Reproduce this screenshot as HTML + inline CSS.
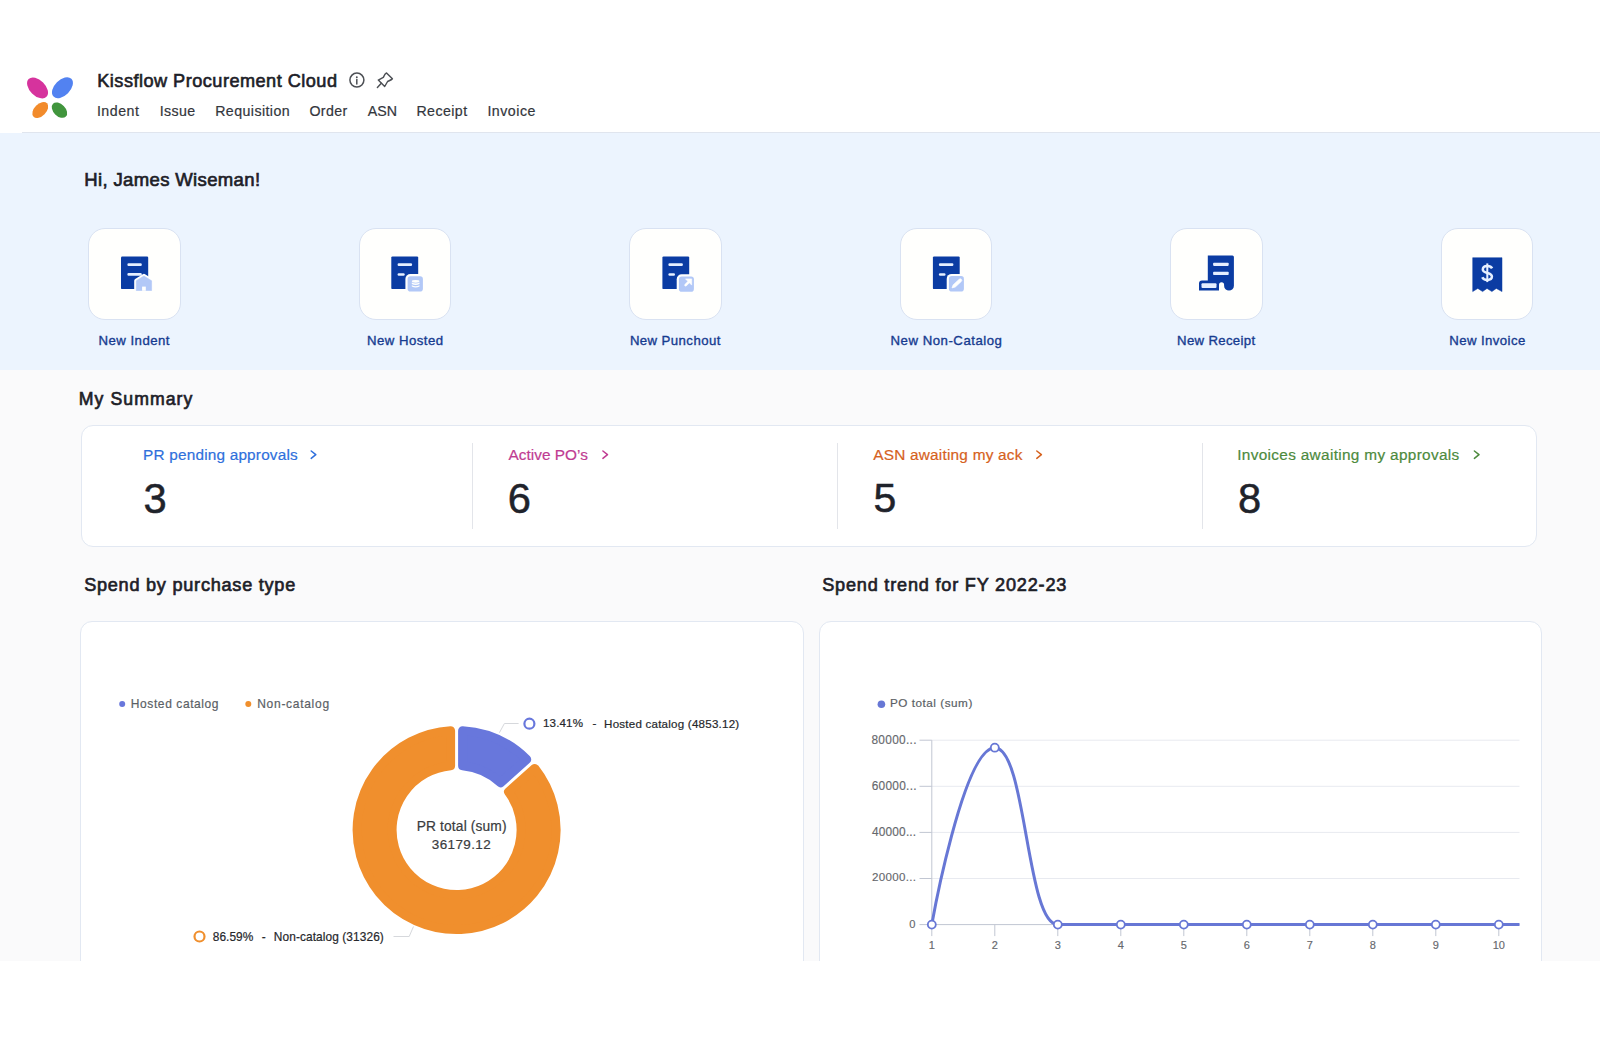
<!DOCTYPE html>
<html><head><meta charset="utf-8">
<title>Kissflow Procurement Cloud</title>
<style>
*{margin:0;padding:0;box-sizing:border-box}
html,body{width:1600px;height:1045px;overflow:hidden;background:#fff;font-family:"Liberation Sans",sans-serif}
.a{position:absolute;white-space:nowrap;line-height:1}
.bg{position:absolute}
.card{position:absolute;width:92.5px;height:92px;border-radius:17px;background:#fffffd;border:1px solid #d9e2f2}
.ic{position:absolute;left:0;top:0}
.div{position:absolute;top:443px;width:1px;height:86px;background:#e3e5ea}
.ccard{position:absolute;top:621px;height:400px;background:#fff;border:1px solid #e2e8f2;border-radius:12px}
</style></head><body>
<div class="bg" style="left:0;top:0;width:1600px;height:133px;background:#fff"></div>
<div class="bg" style="left:22px;top:132px;width:1578px;height:1px;background:#e0e5ee"></div>
<div class="bg" style="left:0;top:133px;width:1600px;height:237px;background:#ecf4fe"></div>
<div class="bg" style="left:0;top:370px;width:1600px;height:591px;background:#fafafb"></div>

<!-- logo -->
<svg class="a" style="left:0;top:0" width="120" height="133" viewBox="0 0 120 133">
  <ellipse cx="37.55" cy="87.9" rx="12.6" ry="7.8" transform="rotate(45 37.55 87.9)" fill="#d6339d"/>
  <ellipse cx="62.45" cy="87.7" rx="12.6" ry="7.8" transform="rotate(-45 62.45 87.7)" fill="#5282f1"/>
  <ellipse cx="40.3" cy="110.05" rx="9.5" ry="6" transform="rotate(-45 40.3 110.05)" fill="#f28b2b"/>
  <ellipse cx="59.45" cy="110.15" rx="9.1" ry="6" transform="rotate(45 59.45 110.15)" fill="#41953d"/>
</svg>

<!-- info + pin icons -->
<svg class="a" style="left:340px;top:65px" width="60" height="30" viewBox="0 0 60 30">
  <circle cx="16.9" cy="15.1" r="7" fill="none" stroke="#4d5055" stroke-width="1.5"/>
  <circle cx="16.8" cy="12.3" r="0.95" fill="#4d5055"/>
  <line x1="16.8" y1="14.6" x2="16.8" y2="18.9" stroke="#4d5055" stroke-width="1.5" stroke-linecap="round"/>
  <path d="M46.5,7.9 L52.4,13.8 C51.6,14.9 49.6,15.6 47.6,16.5 L44.7,21.5 L38.3,15.1 L43.3,12.4 C44.2,10.4 45,8.6 46.5,7.9 Z" fill="none" stroke="#4d5055" stroke-width="1.45" stroke-linejoin="round"/>
  <line x1="41.3" y1="18.3" x2="37.4" y2="22.4" stroke="#4d5055" stroke-width="1.45" stroke-linecap="round"/>
</svg>

<!-- quick action cards -->
<div class="card" style="left:88px;top:227.5px"></div>
<div class="card" style="left:358.5px;top:227.5px"></div>
<div class="card" style="left:629px;top:227.5px"></div>
<div class="card" style="left:899.5px;top:227.5px"></div>
<div class="card" style="left:1170px;top:227.5px"></div>
<div class="card" style="left:1440.5px;top:227.5px"></div>
<svg class="a" style="left:0;top:240px" width="1600" height="70" viewBox="0 240 1600 70">
 <g fill="#0b3ca3">
  <rect x="121" y="256.5" width="27.2" height="32.6" rx="1.2"/>
  <rect x="391.3" y="256.4" width="26.9" height="32.7" rx="1.2"/>
  <rect x="662.4" y="256.4" width="26.8" height="32.7" rx="1.2"/>
  <rect x="932.9" y="256.4" width="26.8" height="32.7" rx="1.2"/>
  <path d="M1207.8,255.6 L1232.4,255.6 Q1233.9,255.6 1233.9,257.1 L1233.9,285.7 A4.9,4.9 0 0 1 1224.1,285.7 L1224.1,284.8 A2.55,2.55 0 0 0 1219,284.8 L1219,290.6 L1199,290.6 L1199,283.6 Q1199,280.6 1202,280.6 L1207.8,280.6 Z"/>
  <path d="M1472.7,257.7 L1502,257.7 L1502,291.6 L1496.3,288.4 L1491.9,291.6 L1487,288.4 L1482.6,291.6 L1477.8,288.4 L1472.7,291.6 Z" stroke="#0b3ca3" stroke-width="0.5" stroke-linejoin="round"/>
 </g>
 <g fill="#e6efff">
  <rect x="127.4" y="263.2" width="14.4" height="2.8" rx="1.2"/>
  <rect x="127.4" y="273" width="14.4" height="2.8" rx="1.2"/>
  <rect x="397.6" y="263.2" width="14.5" height="2.8" rx="1.2"/>
  <rect x="397.6" y="273.2" width="7.1" height="2.6" rx="1.2"/>
  <rect x="668.4" y="263.2" width="14.5" height="2.8" rx="1.2"/>
  <rect x="668.4" y="273.2" width="6.6" height="2.6" rx="1.2"/>
  <rect x="938.9" y="263.2" width="14.5" height="2.8" rx="1.2"/>
  <rect x="938.9" y="273.2" width="6.6" height="2.6" rx="1.2"/>
  <rect x="1213.1" y="262.7" width="15.6" height="3.2" rx="0.8"/>
  <rect x="1213.1" y="271.8" width="15.6" height="3.2" rx="0.8"/>
  <rect x="1201.5" y="283.2" width="15" height="4.8" rx="1"/>
 </g>
 <!-- house -->
 <path d="M143.95,276 L151.6,280.8 L151.6,290.5 L136.3,290.5 L136.3,280.8 Z" fill="#fffffd" stroke="#fffffd" stroke-width="4.2" stroke-linejoin="round"/>
 <path d="M143.95,276 L151.6,280.8 L151.6,290.5 L136.3,290.5 L136.3,280.8 Z" fill="#b2c8f7" stroke="#b2c8f7" stroke-width="0.6" stroke-linejoin="round"/>
 <rect x="142.1" y="286.6" width="3.7" height="4.2" fill="#fffffd"/>
 <!-- badges -->
 <g fill="#fffffd">
  <rect x="405.4" y="274.1" width="19.7" height="19.7" rx="5"/>
  <rect x="676.7" y="274.2" width="19.4" height="19.75" rx="5"/>
  <rect x="946.7" y="273.9" width="19.4" height="19.8" rx="5"/>
 </g>
 <g fill="#b2c8f7">
  <rect x="407.6" y="276.3" width="15.3" height="15.3" rx="2.8"/>
  <rect x="678.9" y="276.4" width="15" height="15.35" rx="2.8"/>
  <rect x="948.9" y="276.1" width="15" height="15.4" rx="2.8"/>
 </g>
 <!-- db -->
 <g fill="#fffffd">
  <ellipse cx="415.65" cy="281.3" rx="3.85" ry="1.35"/>
  <path d="M411.8,282.4 Q415.65,284.6 419.5,282.4 L419.5,284 Q415.65,286.2 411.8,284 Z"/>
  <path d="M411.8,285.2 Q415.65,287.4 419.5,285.2 L419.5,286.6 Q415.65,288.6 411.8,286.6 Z"/>
 </g>
 <!-- arrow -->
 <path d="M685.6,285.2 L689.6,281.2" stroke="#fffffd" stroke-width="2.5" stroke-linecap="round"/>
 <path d="M685.5,278.9 L691.7,278.9 L691.7,285.1 Z" fill="#fffffd" stroke="#fffffd" stroke-width="0.6" stroke-linejoin="round"/>
 <!-- pencil -->
 <path d="M952,287.9 L953.1,284.9 L959.2,279.3 A1.3,1.3 0 0 1 961.3,281.4 L955.3,287 Z" fill="#fffffd" stroke="#fffffd" stroke-width="0.7" stroke-linejoin="round"/>
 <path d="M1492.1,268.4 C1491.4,266.9 1489.7,266.1 1487.3,266.1 C1484.4,266.1 1482.8,267.6 1482.8,269.6 C1482.8,274.2 1491.9,271.9 1491.9,276.6 C1491.9,278.7 1490.1,279.9 1487.3,279.9 C1484.7,279.9 1483,278.9 1482.3,277.2" fill="none" stroke="#e6efff" stroke-width="2.5" stroke-linecap="butt"/>
 <line x1="1487.3" y1="263.4" x2="1487.3" y2="282.1" stroke="#e6efff" stroke-width="2"/>
</svg>

<!-- summary -->
<div class="bg" style="left:81px;top:425px;width:1456px;height:122px;background:#fff;border:1px solid #e2e8f2;border-radius:12px"></div>
<div class="div" style="left:472px"></div>
<div class="div" style="left:837px"></div>
<div class="div" style="left:1202px"></div>
<svg class="a" style="left:0;top:440px" width="1600" height="25" viewBox="0 440 1600 25">
 <g fill="none" stroke-width="1.5" stroke-linecap="round" stroke-linejoin="round">
  <path d="M311.2,451 L315.8,454.7 L311.2,458.4" stroke="#2f6fdc"/>
  <path d="M602.9,451 L607.5,454.7 L602.9,458.4" stroke="#c03b92"/>
  <path d="M1036.8,451 L1041.4,454.7 L1036.8,458.4" stroke="#d6611d"/>
  <path d="M1474.4,451 L1479,454.7 L1474.4,458.4" stroke="#4d8a3d"/>
 </g>
</svg>

<div class="ccard" style="left:80px;width:724px"></div>
<div class="ccard" style="left:818.5px;width:723px"></div>

<!-- charts -->
<svg class="a" style="left:0;top:0" width="1600" height="1045" viewBox="0 0 1600 1045">
 <circle cx="122.2" cy="703.9" r="3" fill="#6877dc"/>
 <circle cx="248.3" cy="703.9" r="3" fill="#f08f2d"/>
 <circle cx="881.4" cy="704.2" r="3.8" fill="#6777d5"/>
 <path d="M534.74,768.40 A99.50,99.50 0 1 1 450.60,730.68 L450.60,765.78 A64.50,64.50 0 1 0 508.53,791.75 Z" fill="#f08f2d" stroke="#f08f2d" stroke-width="9.0" stroke-linejoin="round"/><path d="M462.60,730.68 A99.50,99.50 0 0 1 526.75,759.44 L500.55,782.79 A64.50,64.50 0 0 0 462.60,765.78 Z" fill="#6877dc" stroke="#6877dc" stroke-width="9.0" stroke-linejoin="round"/>
 <path d="M499.4,732.7 L504.4,723.5 L518.6,723.5" fill="none" stroke="#d6d8dc" stroke-width="1"/>
 <circle cx="529.4" cy="723.7" r="5" fill="none" stroke="#6877dc" stroke-width="2.2"/>
 <path d="M413.5,926.5 L409.2,936.5 L393.5,936.5" fill="none" stroke="#d6d8dc" stroke-width="1"/>
 <circle cx="199.5" cy="936.5" r="5" fill="none" stroke="#f08f2d" stroke-width="2.2"/>
 <line x1="931.8" y1="878.50" x2="1519.5" y2="878.50" stroke="#e8eaf0" stroke-width="1"/>
<line x1="919.5" y1="878.50" x2="931.8" y2="878.50" stroke="#c1c6d2" stroke-width="1"/>
<line x1="931.8" y1="832.40" x2="1519.5" y2="832.40" stroke="#e8eaf0" stroke-width="1"/>
<line x1="919.5" y1="832.40" x2="931.8" y2="832.40" stroke="#c1c6d2" stroke-width="1"/>
<line x1="931.8" y1="786.30" x2="1519.5" y2="786.30" stroke="#e8eaf0" stroke-width="1"/>
<line x1="919.5" y1="786.30" x2="931.8" y2="786.30" stroke="#c1c6d2" stroke-width="1"/>
<line x1="931.8" y1="740.20" x2="1519.5" y2="740.20" stroke="#e8eaf0" stroke-width="1"/>
<line x1="919.5" y1="740.20" x2="931.8" y2="740.20" stroke="#c1c6d2" stroke-width="1"/>
<line x1="919.5" y1="924.60" x2="931.8" y2="924.60" stroke="#c1c6d2" stroke-width="1"/>
<line x1="931.8" y1="740.20" x2="931.8" y2="924.60" stroke="#c1c6d2" stroke-width="1"/>
<line x1="931.8" y1="924.60" x2="1519.5" y2="924.60" stroke="#c1c6d2" stroke-width="1"/>
<line x1="931.8" y1="924.60" x2="931.8" y2="936.10" stroke="#c1c6d2" stroke-width="1"/>
<line x1="994.8" y1="924.60" x2="994.8" y2="936.10" stroke="#c1c6d2" stroke-width="1"/>
<line x1="1057.8" y1="924.60" x2="1057.8" y2="936.10" stroke="#c1c6d2" stroke-width="1"/>
<line x1="1120.8" y1="924.60" x2="1120.8" y2="936.10" stroke="#c1c6d2" stroke-width="1"/>
<line x1="1183.8" y1="924.60" x2="1183.8" y2="936.10" stroke="#c1c6d2" stroke-width="1"/>
<line x1="1246.8" y1="924.60" x2="1246.8" y2="936.10" stroke="#c1c6d2" stroke-width="1"/>
<line x1="1309.8" y1="924.60" x2="1309.8" y2="936.10" stroke="#c1c6d2" stroke-width="1"/>
<line x1="1372.8" y1="924.60" x2="1372.8" y2="936.10" stroke="#c1c6d2" stroke-width="1"/>
<line x1="1435.8" y1="924.60" x2="1435.8" y2="936.10" stroke="#c1c6d2" stroke-width="1"/>
<line x1="1498.8" y1="924.60" x2="1498.8" y2="936.10" stroke="#c1c6d2" stroke-width="1"/>
<defs><clipPath id="lcclip"><rect x="900" y="700" width="619.5" height="260"/></clipPath></defs>
<path d="M931.80,924.60 C931.80,924.60 963.30,747.70 994.80,747.70 C1026.30,747.70 1026.30,924.60 1057.80,924.60 C1089.30,924.60 1089.30,924.60 1120.80,924.60 C1152.30,924.60 1152.30,924.60 1183.80,924.60 C1215.30,924.60 1215.30,924.60 1246.80,924.60 C1278.30,924.60 1278.30,924.60 1309.80,924.60 C1341.30,924.60 1341.30,924.60 1372.80,924.60 C1404.30,924.60 1404.30,924.60 1435.80,924.60 C1467.30,924.60 1467.30,924.60 1498.80,924.60 C1530.30,924.60 1561.80,924.60 1561.80,924.60" fill="none" stroke="#6777d5" stroke-width="3" clip-path="url(#lcclip)"/>
<circle cx="931.80" cy="924.60" r="4" fill="#fff" stroke="#6777d5" stroke-width="1.8"/>
<circle cx="994.80" cy="747.70" r="4" fill="#fff" stroke="#6777d5" stroke-width="1.8"/>
<circle cx="1057.80" cy="924.60" r="4" fill="#fff" stroke="#6777d5" stroke-width="1.8"/>
<circle cx="1120.80" cy="924.60" r="4" fill="#fff" stroke="#6777d5" stroke-width="1.8"/>
<circle cx="1183.80" cy="924.60" r="4" fill="#fff" stroke="#6777d5" stroke-width="1.8"/>
<circle cx="1246.80" cy="924.60" r="4" fill="#fff" stroke="#6777d5" stroke-width="1.8"/>
<circle cx="1309.80" cy="924.60" r="4" fill="#fff" stroke="#6777d5" stroke-width="1.8"/>
<circle cx="1372.80" cy="924.60" r="4" fill="#fff" stroke="#6777d5" stroke-width="1.8"/>
<circle cx="1435.80" cy="924.60" r="4" fill="#fff" stroke="#6777d5" stroke-width="1.8"/>
<circle cx="1498.80" cy="924.60" r="4" fill="#fff" stroke="#6777d5" stroke-width="1.8"/>
</svg>

<div id="title" class="a" style="left:97.29px;top:71.65px;font-size:18.17px;font-weight:400;color:#1d2027;letter-spacing:0.467px;-webkit-text-stroke:0.6px currentColor">Kissflow Procurement Cloud</div>
<div id="n1" class="a" style="left:96.92px;top:103.73px;font-size:14.20px;font-weight:400;color:#33363c;letter-spacing:0.514px;-webkit-text-stroke:0.2px currentColor">Indent</div>
<div id="n2" class="a" style="left:159.77px;top:103.73px;font-size:14.20px;font-weight:400;color:#33363c;letter-spacing:0.390px;-webkit-text-stroke:0.2px currentColor">Issue</div>
<div id="n3" class="a" style="left:215.19px;top:103.73px;font-size:14.20px;font-weight:400;color:#33363c;letter-spacing:0.425px;-webkit-text-stroke:0.2px currentColor">Requisition</div>
<div id="n4" class="a" style="left:309.40px;top:103.73px;font-size:14.20px;font-weight:400;color:#33363c;letter-spacing:0.365px;-webkit-text-stroke:0.2px currentColor">Order</div>
<div id="n5" class="a" style="left:367.84px;top:103.73px;font-size:14.20px;font-weight:400;color:#33363c;letter-spacing:0.049px;-webkit-text-stroke:0.2px currentColor">ASN</div>
<div id="n6" class="a" style="left:416.42px;top:103.73px;font-size:14.20px;font-weight:400;color:#33363c;letter-spacing:0.433px;-webkit-text-stroke:0.2px currentColor">Receipt</div>
<div id="n7" class="a" style="left:487.39px;top:103.73px;font-size:14.20px;font-weight:400;color:#33363c;letter-spacing:0.509px;-webkit-text-stroke:0.2px currentColor">Invoice</div>
<div id="hi" class="a" style="left:84.25px;top:170.93px;font-size:18.55px;font-weight:400;color:#1d2027;letter-spacing:0.346px;-webkit-text-stroke:0.65px currentColor">Hi, James Wiseman!</div>
<div id="l1" class="a" style="left:98.53px;top:333.79px;font-size:13.19px;font-weight:400;color:#163b90;letter-spacing:0.477px;-webkit-text-stroke:0.35px currentColor">New Indent</div>
<div id="l2" class="a" style="left:366.94px;top:333.79px;font-size:13.19px;font-weight:400;color:#163b90;letter-spacing:0.482px;-webkit-text-stroke:0.35px currentColor">New Hosted</div>
<div id="l3" class="a" style="left:629.88px;top:333.79px;font-size:13.19px;font-weight:400;color:#163b90;letter-spacing:0.425px;-webkit-text-stroke:0.35px currentColor">New Punchout</div>
<div id="l4" class="a" style="left:890.53px;top:333.79px;font-size:13.19px;font-weight:400;color:#163b90;letter-spacing:0.524px;-webkit-text-stroke:0.35px currentColor">New Non-Catalog</div>
<div id="l5" class="a" style="left:1177.06px;top:333.79px;font-size:13.19px;font-weight:400;color:#163b90;letter-spacing:0.324px;-webkit-text-stroke:0.35px currentColor">New Receipt</div>
<div id="l6" class="a" style="left:1449.31px;top:333.79px;font-size:13.19px;font-weight:400;color:#163b90;letter-spacing:0.409px;-webkit-text-stroke:0.35px currentColor">New Invoice</div>
<div id="mys" class="a" style="left:78.87px;top:391.17px;font-size:17.68px;font-weight:400;color:#1d2027;letter-spacing:1.042px;-webkit-text-stroke:0.65px currentColor">My Summary</div>
<div id="s1" class="a" style="left:143.09px;top:446.74px;font-size:15.36px;font-weight:400;color:#2f6fdc;letter-spacing:0.186px;-webkit-text-stroke:0.2px currentColor">PR pending approvals</div>
<div id="s2" class="a" style="left:508.56px;top:446.74px;font-size:15.36px;font-weight:400;color:#c03b92;letter-spacing:0.017px;-webkit-text-stroke:0.2px currentColor">Active PO’s</div>
<div id="s3" class="a" style="left:873.23px;top:446.74px;font-size:15.36px;font-weight:400;color:#d6611d;letter-spacing:0.227px;-webkit-text-stroke:0.2px currentColor">ASN awaiting my ack</div>
<div id="s4" class="a" style="left:1237.18px;top:446.64px;font-size:15.36px;font-weight:400;color:#4d8a3d;letter-spacing:0.329px;-webkit-text-stroke:0.2px currentColor">Invoices awaiting my approvals</div>
<div id="d1" class="a" style="left:143.55px;top:477.56px;font-size:41.69px;font-weight:400;color:#1f232b;letter-spacing:0.000px;-webkit-text-stroke:0.5px currentColor">3</div>
<div id="d2" class="a" style="left:507.85px;top:477.56px;font-size:41.69px;font-weight:400;color:#1f232b;letter-spacing:0.000px;-webkit-text-stroke:0.5px currentColor">6</div>
<div id="d3" class="a" style="left:873.60px;top:478.06px;font-size:40.99px;font-weight:400;color:#1f232b;letter-spacing:0.000px;-webkit-text-stroke:0.5px currentColor">5</div>
<div id="d4" class="a" style="left:1238.08px;top:477.56px;font-size:41.69px;font-weight:400;color:#1f232b;letter-spacing:0.000px;-webkit-text-stroke:0.5px currentColor">8</div>
<div id="sp1" class="a" style="left:84.15px;top:575.50px;font-size:18.12px;font-weight:400;color:#1d2027;letter-spacing:0.752px;-webkit-text-stroke:0.65px currentColor">Spend by purchase type</div>
<div id="sp2" class="a" style="left:822.17px;top:575.50px;font-size:18.12px;font-weight:400;color:#1d2027;letter-spacing:0.802px;-webkit-text-stroke:0.65px currentColor">Spend trend for FY 2022-23</div>
<div id="lg1" class="a" style="left:130.84px;top:697.53px;font-size:12.03px;font-weight:400;color:#5b5f66;letter-spacing:0.582px;-webkit-text-stroke:0.2px currentColor">Hosted catalog</div>
<div id="lg2" class="a" style="left:257.22px;top:697.58px;font-size:12.03px;font-weight:400;color:#5b5f66;letter-spacing:0.706px;-webkit-text-stroke:0.2px currentColor">Non-catalog</div>
<div id="lg3" class="a" style="left:889.94px;top:697.27px;font-size:11.74px;font-weight:400;color:#5b5f66;letter-spacing:0.519px;-webkit-text-stroke:0.2px currentColor">PO total (sum)</div>
<div id="p1" class="a" style="left:542.98px;top:718.44px;font-size:11.59px;font-weight:400;color:#26282c;letter-spacing:0.149px;-webkit-text-stroke:0.2px currentColor">13.41%</div>
<div id="p1d" class="a" style="left:592.38px;top:718.44px;font-size:11.59px;font-weight:400;color:#26282c;letter-spacing:0.000px;-webkit-text-stroke:0.2px currentColor">-</div>
<div id="p1t" class="a" style="left:604.06px;top:718.74px;font-size:11.59px;font-weight:400;color:#26282c;letter-spacing:0.222px;-webkit-text-stroke:0.2px currentColor">Hosted catalog (4853.12)</div>
<div id="p2" class="a" style="left:212.71px;top:931.55px;font-size:11.88px;font-weight:400;color:#26282c;letter-spacing:0.076px;-webkit-text-stroke:0.2px currentColor">86.59%</div>
<div id="p2d" class="a" style="left:261.63px;top:931.60px;font-size:11.88px;font-weight:400;color:#26282c;letter-spacing:0.000px;-webkit-text-stroke:0.2px currentColor">-</div>
<div id="p2t" class="a" style="left:273.87px;top:931.80px;font-size:11.88px;font-weight:400;color:#26282c;letter-spacing:0.094px;-webkit-text-stroke:0.2px currentColor">Non-catalog (31326)</div>
<div id="c1" class="a" style="left:416.76px;top:820.00px;font-size:13.77px;font-weight:400;color:#3a3c40;letter-spacing:0.139px;-webkit-text-stroke:0.2px currentColor">PR total (sum)</div>
<div id="c2" class="a" style="left:431.79px;top:837.59px;font-size:13.48px;font-weight:400;color:#3a3c40;letter-spacing:0.395px;-webkit-text-stroke:0.2px currentColor">36179.12</div>
<div id="y80" class="a" style="left:871.39px;top:734.70px;font-size:11.88px;font-weight:400;color:#66686d;letter-spacing:0.318px;-webkit-text-stroke:0.15px currentColor">80000...</div>
<div id="y60" class="a" style="left:871.66px;top:781.00px;font-size:11.88px;font-weight:400;color:#66686d;letter-spacing:0.277px;-webkit-text-stroke:0.15px currentColor">60000...</div>
<div id="y40" class="a" style="left:871.95px;top:826.90px;font-size:11.88px;font-weight:400;color:#66686d;letter-spacing:0.184px;-webkit-text-stroke:0.15px currentColor">40000...</div>
<div id="y20" class="a" style="left:871.99px;top:872.49px;font-size:11.59px;font-weight:400;color:#66686d;letter-spacing:0.317px;-webkit-text-stroke:0.15px currentColor">20000...</div>
<div id="y0" class="a" style="left:909.33px;top:919.26px;font-size:11.16px;font-weight:400;color:#66686d;letter-spacing:0.000px;-webkit-text-stroke:0.15px currentColor">0</div>
<div id="x1" class="a" style="left:901.80px;width:60px;text-align:center;top:940.24px;font-size:11.01px;font-weight:400;color:#66686d;-webkit-text-stroke:0.15px currentColor">1</div>
<div id="x2" class="a" style="left:964.80px;width:60px;text-align:center;top:940.24px;font-size:11.01px;font-weight:400;color:#66686d;-webkit-text-stroke:0.15px currentColor">2</div>
<div id="x3" class="a" style="left:1027.80px;width:60px;text-align:center;top:940.24px;font-size:11.01px;font-weight:400;color:#66686d;-webkit-text-stroke:0.15px currentColor">3</div>
<div id="x4" class="a" style="left:1090.80px;width:60px;text-align:center;top:940.24px;font-size:11.01px;font-weight:400;color:#66686d;-webkit-text-stroke:0.15px currentColor">4</div>
<div id="x5" class="a" style="left:1153.80px;width:60px;text-align:center;top:940.24px;font-size:11.01px;font-weight:400;color:#66686d;-webkit-text-stroke:0.15px currentColor">5</div>
<div id="x6" class="a" style="left:1216.80px;width:60px;text-align:center;top:940.24px;font-size:11.01px;font-weight:400;color:#66686d;-webkit-text-stroke:0.15px currentColor">6</div>
<div id="x7" class="a" style="left:1279.80px;width:60px;text-align:center;top:940.24px;font-size:11.01px;font-weight:400;color:#66686d;-webkit-text-stroke:0.15px currentColor">7</div>
<div id="x8" class="a" style="left:1342.80px;width:60px;text-align:center;top:940.24px;font-size:11.01px;font-weight:400;color:#66686d;-webkit-text-stroke:0.15px currentColor">8</div>
<div id="x9" class="a" style="left:1405.80px;width:60px;text-align:center;top:940.24px;font-size:11.01px;font-weight:400;color:#66686d;-webkit-text-stroke:0.15px currentColor">9</div>
<div id="x10" class="a" style="left:1468.80px;width:60px;text-align:center;top:940.24px;font-size:11.01px;font-weight:400;color:#66686d;-webkit-text-stroke:0.15px currentColor">10</div>

<!-- white bottom -->
<div class="bg" style="left:0;top:961px;width:1600px;height:84px;background:#fff"></div>
</body></html>
